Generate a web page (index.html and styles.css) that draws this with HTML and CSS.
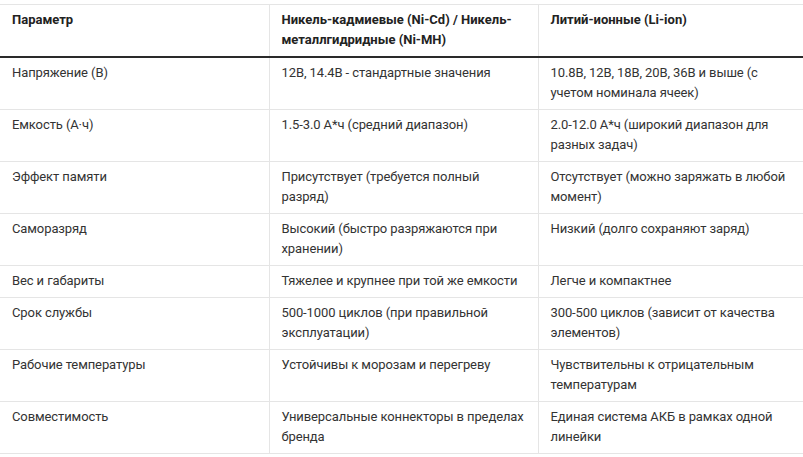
FILE: index.html
```html
<!DOCTYPE html>
<html lang="ru">
<head>
<meta charset="utf-8">
<link rel="stylesheet" href="styles.css">
</head>
<body>
<div class="wrap">
<table class="cmp">
  <colgroup><col class="c1"><col class="c2"><col class="c3"></colgroup>
  <thead>
    <tr><th>Параметр</th><th>Никель-кадмиевые (Ni-Cd) / Никель-металлгидридные (Ni-MH)</th><th>Литий-ионные (Li-ion)</th></tr>
  </thead>
  <tbody>
    <tr><td>Напряжение (В)</td><td>12В, 14.4В - стандартные значения</td><td>10.8В, 12В, 18В, 20В, 36В и выше (с учетом номинала ячеек)</td></tr>
    <tr><td>Емкость (А·ч)</td><td>1.5-3.0 А*ч (средний диапазон)</td><td>2.0-12.0 А*ч (широкий диапазон для разных задач)</td></tr>
    <tr><td>Эффект памяти</td><td>Присутствует (требуется полный разряд)</td><td>Отсутствует (можно заряжать в любой момент)</td></tr>
    <tr><td>Саморазряд</td><td>Высокий (быстро разряжаются при хранении)</td><td>Низкий (долго сохраняют заряд)</td></tr>
    <tr><td>Вес и габариты</td><td>Тяжелее и крупнее при той же емкости</td><td>Легче и компактнее</td></tr>
    <tr><td>Срок службы</td><td>500-1000 циклов (при правильной эксплуатации)</td><td>300-500 циклов (зависит от качества элементов)</td></tr>
    <tr><td>Рабочие температуры</td><td>Устойчивы к морозам и перегреву</td><td>Чувствительны к отрицательным температурам</td></tr>
    <tr><td>Совместимость</td><td>Универсальные коннекторы в пределах бренда</td><td>Единая система АКБ в рамках одной линейки</td></tr>
  </tbody>
</table>
</div>
</body>
</html>
```
FILE: styles.css
```css
html, body {
  margin: 0;
  padding: 0;
  background: #fff;
}
.wrap {
  padding-top: 4px;
}
.cmp {
  width: 100%;
  border-collapse: collapse;
  table-layout: fixed;
  font-family: Roboto, "Noto Sans", sans-serif;
  font-size: 13px;
  line-height: 20px;
  color: #333;
}
.c1 { width: 269px; }
.c2 { width: 269px; }
.cmp thead tr {
  border-top: 1px solid #e5e5e5;
}
.cmp th {
  text-align: left;
  vertical-align: top;
  font-weight: bold;
  color: #222;
  padding: 5px 12px 6px 12px;
  border-bottom: 2px solid #2a2a2a;
  border-right: 1px solid #e5e5e5;
}
.cmp td {
  vertical-align: top;
  letter-spacing: -0.1px;
  padding: 5px 11px 6px 12px;
  border-bottom: 1px solid #e5e5e5;
  border-right: 1px solid #e5e5e5;
}
.cmp th:last-child, .cmp td:last-child {
  border-right: none;
}
```
